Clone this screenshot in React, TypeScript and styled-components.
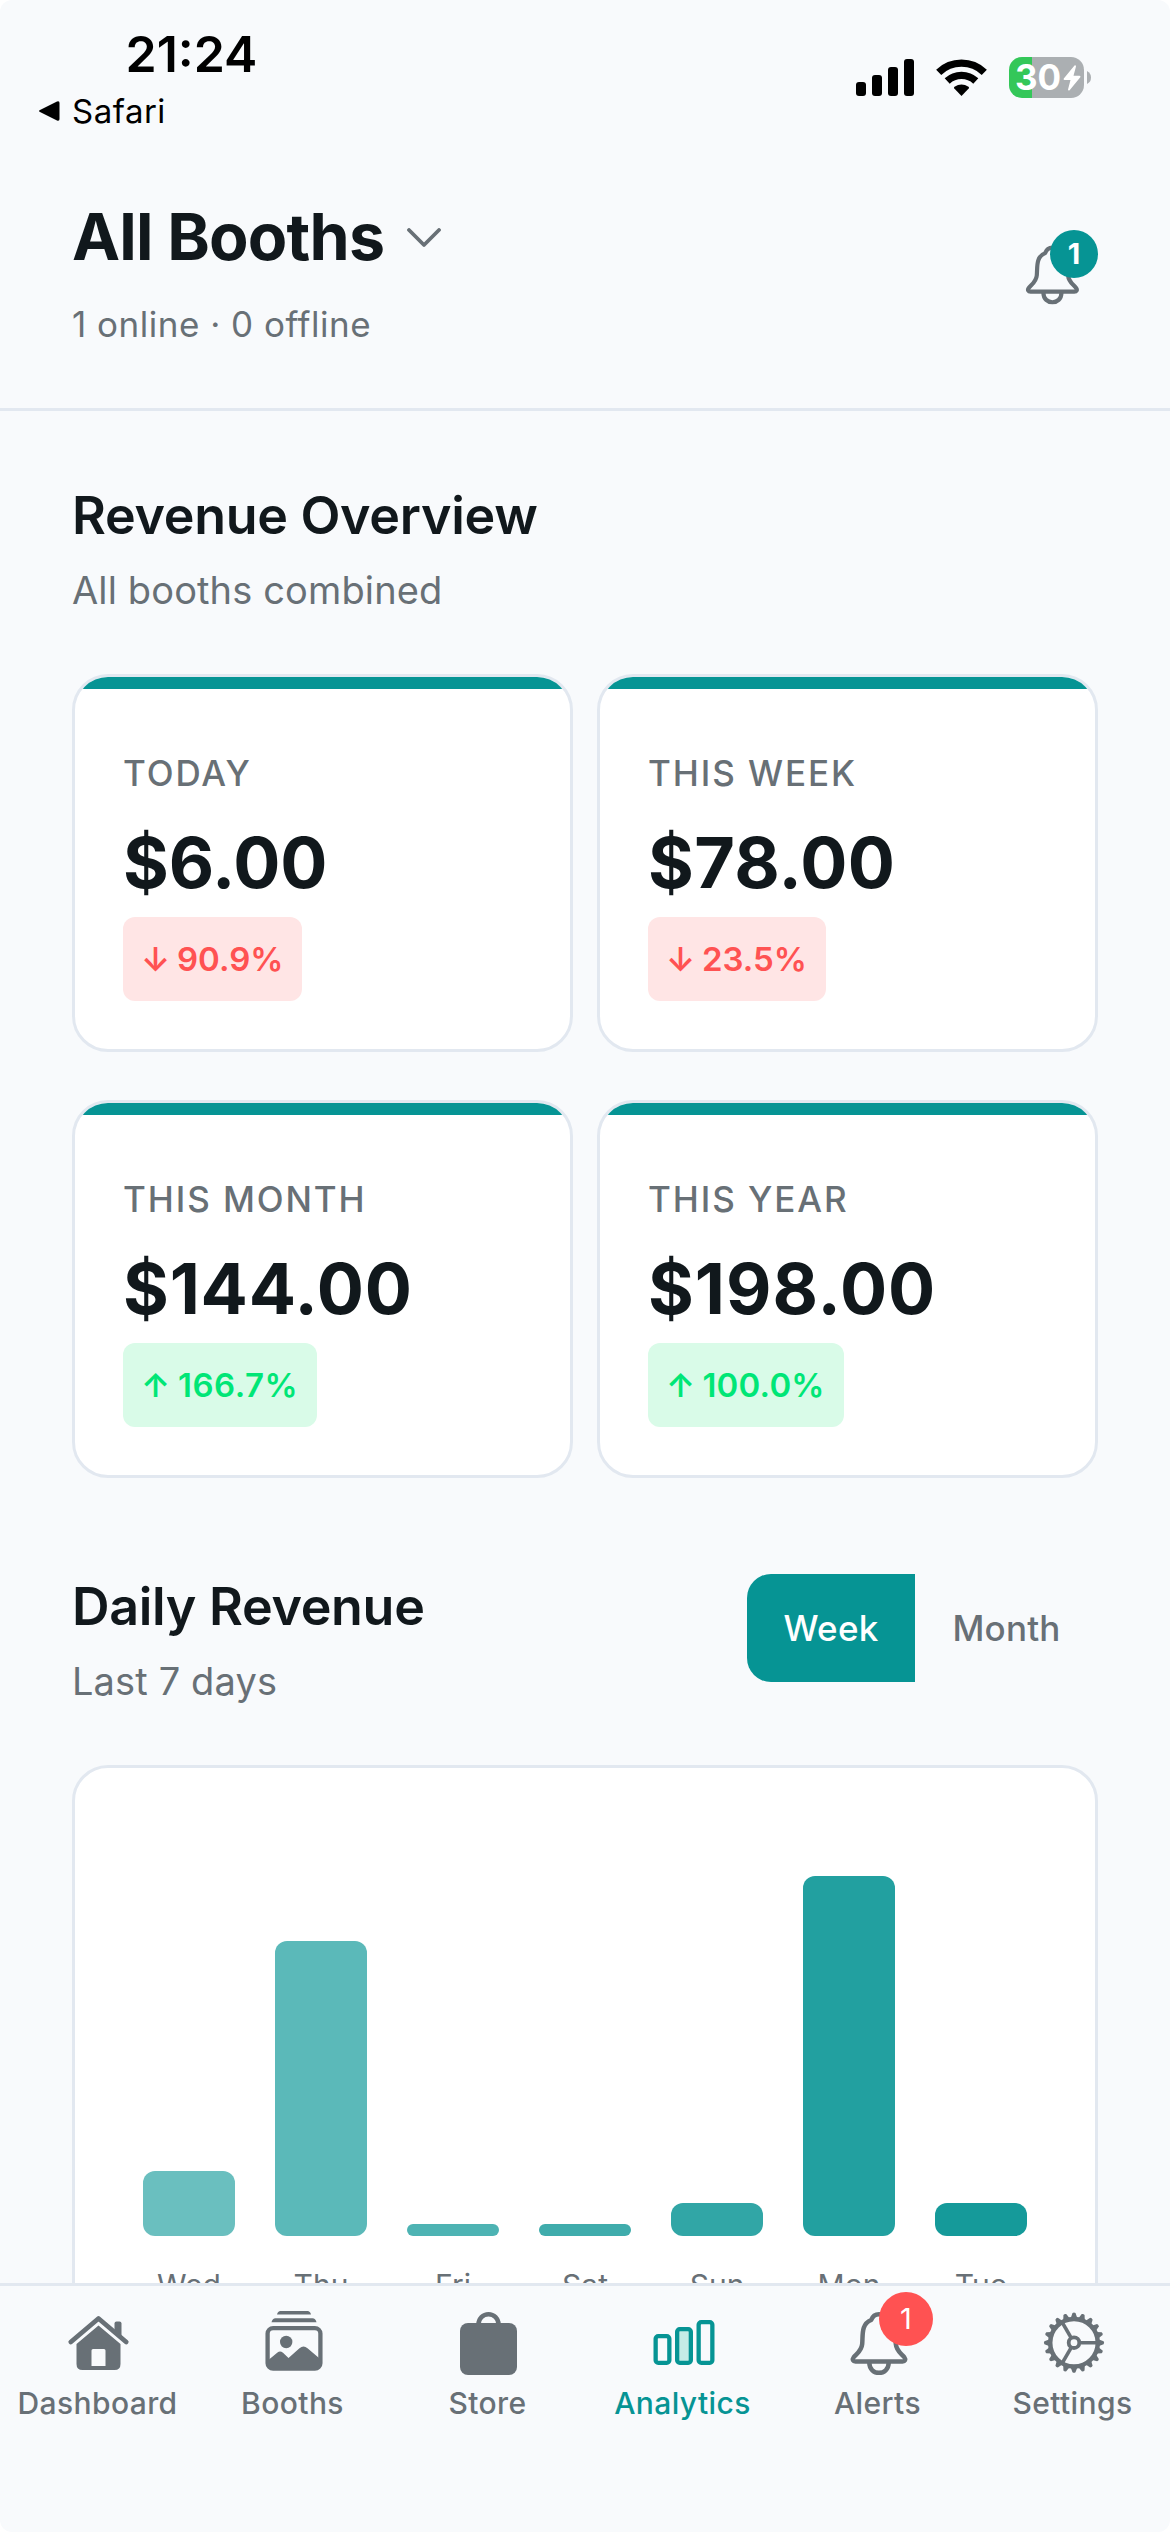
import React from "react";
import styled, { createGlobalStyle } from "styled-components";

const teal = "#069494";
const ink = "#11181c";
const muted = "#687076";
const line = "#e2e8f0";
const surface = "#f8fafc";

const GlobalStyle = createGlobalStyle`
  * { box-sizing: border-box; }
  body { margin: 0; background: #fff; }
`;

const Screen = styled.div`
  width: 1170px;
  height: 2532px;
  display: flex;
  flex-direction: column;
  overflow: hidden;
  border-radius: 12px;
  background: ${surface};
  color: ${ink};
  font-family: Inter, "Liberation Sans", sans-serif;
`;

const StatusBar = styled.div`
  height: 141px;
  flex: none;
  display: flex;
  justify-content: space-between;
  padding: 24px 79px 0 38px;
  color: #000;
`;

const Time = styled.div`
  padding-left: 87.5px;
  font-size: 50px;
  line-height: 60px;
  font-weight: 600;
  letter-spacing: 0;
`;

const BackLink = styled.div`
  display: flex;
  align-items: center;
  gap: 11px;
  margin-top: 7px;
  font-size: 33px;
  line-height: 40px;
  font-weight: 400;
  letter-spacing: 0.5px;
`;

const StatusIcons = styled.div`
  height: 41px;
  margin-top: 33px;
  display: flex;
  align-items: center;
`;

const Signal = styled.svg`
  margin-right: 22px;
`;

const Wifi = styled.svg`
  margin-right: 22px;
`;

const Battery = styled.div`
  width: 75px;
  height: 41px;
  border-radius: 13px;
  display: flex;
  align-items: center;
  padding-left: 6px;
  gap: 2px;
  background: linear-gradient(90deg, #34c759 23px, #abafb2 23px);
  color: #fff;
  font-size: 35px;
  line-height: 41px;
  font-weight: 700;
`;

const BatteryNub = styled.svg`
  margin-left: 3px;
`;

const Header = styled.header`
  height: 270px;
  flex: none;
  display: flex;
  justify-content: space-between;
  padding: 58px 72px 0;
  border-bottom: 3px solid ${line};
`;

const TitleRow = styled.div`
  display: flex;
  align-items: center;
  gap: 23px;
`;

const Title = styled.h1`
  margin: 0;
  font-size: 64.5px;
  line-height: 77px;
  font-weight: 700;
  letter-spacing: -0.8px;
`;

const HeaderStatus = styled.div`
  margin-top: 24px;
  font-size: 35px;
  line-height: 48px;
  letter-spacing: 0.5px;
  color: ${muted};
`;

const HeaderBell = styled.div`
  position: relative;
  width: 80px;
  height: 80px;
  margin-top: 31px;
  padding-top: 11px;
`;

const CountBadge = styled.span<{ $size: number; $color: string; $weight: number; $top: number; $left: number }>`
  position: absolute;
  top: ${(p) => p.$top}px;
  left: ${(p) => p.$left}px;
  width: ${(p) => p.$size}px;
  height: ${(p) => p.$size}px;
  border-radius: 50%;
  background: ${(p) => p.$color};
  color: #fff;
  font-size: 29px;
  line-height: ${(p) => p.$size}px;
  font-weight: ${(p) => p.$weight};
  letter-spacing: 0;
  text-align: center;
`;

const Main = styled.main`
  flex: 1;
  min-height: 0;
  overflow: hidden;
  padding: 72px 72px 0;
`;

const SectionTitle = styled.h2`
  margin: 0;
  font-size: 52px;
  line-height: 66px;
  font-weight: 600;
  letter-spacing: -0.3px;
`;

const SectionSub = styled.div`
  margin: 14px 0 57px;
  font-size: 38px;
  line-height: 54px;
  letter-spacing: 0.13px;
  color: ${muted};
`;

const CardGrid = styled.div`
  display: grid;
  grid-template-columns: 1fr 1fr;
  gap: 48px 24px;
`;

const Card = styled.article`
  height: 378px;
  border: 3px solid ${line};
  border-radius: 36px;
  overflow: hidden;
  background: #fff;
`;

const Accent = styled.div`
  height: 12px;
  background: ${teal};
`;

const CardBody = styled.div`
  padding: 60px 48px 0;
  display: flex;
  flex-direction: column;
  align-items: flex-start;
`;

const CardLabel = styled.div`
  font-size: 35px;
  line-height: 48px;
  font-weight: 500;
  letter-spacing: 1.9px;
  color: ${muted};
`;

const CardValue = styled.div<{ $tracking: number }>`
  margin-top: 24px;
  font-size: 70px;
  line-height: 84px;
  font-weight: 700;
  letter-spacing: ${(p) => p.$tracking}px;
`;

const Trend = styled.div<{ $up: boolean; $tracking: number }>`
  height: 84px;
  margin-top: 12px;
  padding: 0 19px 0 18px;
  border-radius: 12px;
  background: ${(p) => (p.$up ? "#d9fbe8" : "#ffe5e5")};
  color: ${(p) => (p.$up ? "#00e676" : "#ff5252")};
  font-size: 33px;
  line-height: 84px;
  font-weight: 600;
  letter-spacing: ${(p) => p.$tracking}px;
  word-spacing: -1.4px;
  white-space: pre;
`;

const DailyHead = styled.div`
  margin-top: 96px;
  display: flex;
  justify-content: space-between;
  align-items: flex-start;
`;

const Segments = styled.div`
  display: flex;
  height: 108px;
  border-radius: 24px;
  overflow: hidden;
`;

const Segment = styled.button<{ $active?: boolean }>`
  width: ${(p) => (p.$active ? 168 : 183)}px;
  padding: 0;
  border: 0;
  background: ${(p) => (p.$active ? teal : "transparent")};
  color: ${(p) => (p.$active ? "#fff" : muted)};
  font: 500 35px/108px Inter, "Liberation Sans", sans-serif;
  letter-spacing: 0.2px;
`;

const ChartCard = styled.div`
  height: 640px;
  display: flex;
  padding: 48px 48px 0;
  border: 3px solid ${line};
  border-radius: 36px;
  background: #fff;
`;

const Column = styled.div`
  flex: 1;
  display: flex;
  flex-direction: column;
  align-items: center;
`;

const BarTrack = styled.div`
  height: 420px;
  display: flex;
  align-items: flex-end;
`;

const Bar = styled.div`
  width: 92px;
  border-radius: 12px;
  background: ${teal};
`;

const Day = styled.div`
  margin-top: 28px;
  font-size: 30px;
  line-height: 42px;
  font-weight: 400;
  color: ${muted};
`;

const TabBar = styled.nav`
  height: 249px;
  flex: none;
  display: grid;
  grid-template-columns: repeat(6, 1fr);
  border-top: 3px solid ${line};
  padding-top: 21px;
`;

const Tab = styled.div<{ $active?: boolean }>`
  display: flex;
  flex-direction: column;
  align-items: center;
  gap: 6px;
  color: ${(p) => (p.$active ? teal : muted)};
  font-size: 30px;
  line-height: 36px;
  font-weight: 500;
  letter-spacing: 0.4px;
`;

const TabIcon = styled.div`
  position: relative;
  width: 72px;
  height: 72px;
  svg { display: block; }
`;

const BellIcon = ({ size, stroke = 4.5 }: { size: number; stroke?: number }) => (
  <svg width={size} height={size} viewBox="0 0 72 72" fill="none" stroke={muted} strokeWidth={stroke} strokeLinejoin="round">
    <path d="M13.5 54.5H60.5C63 54.5 64 52.5 62.5 50.5C60 47 54.5 44.5 53.8 37C53 28 55 17 44.8 13C43.5 9.5 41 7.2 37 7.2C33 7.2 30.5 9.5 29.2 13C19 17 21 28 20.2 37C19.5 44.5 14 47 11.5 50.5C10 52.5 11 54.5 13.5 54.5Z" />
    <path d="M27.3 55.5C27.3 69.3 46.7 69.3 46.7 55.5" />
  </svg>
);

const HouseIcon = () => (
  <svg width="72" height="72" viewBox="0 0 72 72" fill={muted}>
    <path d="M8.8 35L36.5 11.5L64.2 35" fill="none" stroke={muted} strokeWidth="4.8" strokeLinecap="round" strokeLinejoin="round" />
    <path d="M52.5 26V16.5Q52.5 14.5 54.5 14.5H57.5Q59.5 14.5 59.5 16.5V32Z" />
    <path fillRule="evenodd" d="M36.5 18.5L58.5 37V57Q58.5 63 52.5 63H20.5Q14.5 63 14.5 57V37ZM31 42Q29.5 42 29.5 43.5V59H43.5V43.5Q43.5 42 42 42Z" />
  </svg>
);

const PhotosIcon = () => (
  <svg width="72" height="72" viewBox="0 0 72 72" fill={muted}>
    <path d="M20 7.5Q20.8 4 23.5 4H50.5Q53.2 4 54 7.5Z" />
    <path d="M14.5 15.2Q15.5 11.2 18.5 11.2H55.5Q58.5 11.2 59.5 15.2Z" />
    <rect x="10.6" y="21.1" width="52.8" height="40.6" rx="5.5" fill="none" stroke={muted} strokeWidth="4.3" />
    <circle cx="29.2" cy="35" r="6.2" />
    <path d="M12 52.5L20.5 45.5Q23.2 43.6 26 45.8L31.5 51L42.5 41.2Q46.5 37.8 50.5 41.2L62 51V60H12Z" />
  </svg>
);

const BagIcon = () => (
  <svg width="72" height="72" viewBox="0 0 72 72" fill={muted}>
    <rect x="8" y="16" width="57" height="52" rx="8" />
    <path d="M26.5 18V17.2A10 10 0 0 1 46.5 17.2V18" fill="none" stroke={muted} strokeWidth="4.5" />
  </svg>
);

const ChartIcon = () => (
  <svg width="72" height="72" viewBox="0 0 72 72" fill="none" stroke={teal} strokeWidth="4.3">
    <rect x="8.65" y="29.15" width="13.7" height="26.7" rx="2.6" />
    <rect x="30.15" y="22.15" width="13.7" height="33.7" rx="2.6" fill="#c5ece6" />
    <rect x="51.65" y="15.15" width="13.7" height="40.7" rx="2.6" />
  </svg>
);

const GearIcon = () => {
  const teeth = Array.from({ length: 20 }, (_, i) => i * 18);
  return (
    <svg width="72" height="72" viewBox="0 0 72 72">
      <g transform="translate(37 35.7)" fill="none" stroke={muted}>
        <circle r="23.8" strokeWidth="4.5" />
        <g fill={muted} stroke="none">
          {teeth.map((a) => (
            <path key={a} d="M25 -3.2L29.6 -1.5Q30.6 0 29.6 1.5L25 3.2Z" transform={`rotate(${a})`} />
          ))}
        </g>
        <circle r="5.3" strokeWidth="3.8" />
        {[0, 120, 240].map((a) => (
          <path key={a} d="M6.5 0H23" strokeWidth="3.6" transform={`rotate(${a})`} />
        ))}
      </g>
    </svg>
  );
};

const stats = [
  { label: "TODAY", value: "$6.00", trend: "90.9%", up: false, valueTracking: -0.1, trendTracking: 0 },
  { label: "THIS WEEK", value: "$78.00", trend: "23.5%", up: false, valueTracking: 0.3, trendTracking: 0 },
  { label: "THIS MONTH", value: "$144.00", trend: "166.7%", up: true, valueTracking: 0.8, trendTracking: 0.5 },
  { label: "THIS YEAR", value: "$198.00", trend: "100.0%", up: true, valueTracking: 1, trendTracking: 0.2 },
];

const days = [
  { name: "Wed", height: 65 },
  { name: "Thu", height: 295 },
  { name: "Fri", height: 12 },
  { name: "Sat", height: 12 },
  { name: "Sun", height: 33 },
  { name: "Mon", height: 360 },
  { name: "Tue", height: 33 },
];

export default function App() {
  return (
    <>
      <GlobalStyle />
      <Screen>
        <StatusBar>
          <div>
            <Time>21:24</Time>
            <BackLink>
              <svg width="23" height="22" viewBox="0 0 23 22">
                <path d="M2 10L19 1.5Q21.5 .6 21.5 3V19Q21.5 21.4 19 20.5L2 12Q0 11 2 10Z" />
              </svg>
              Safari
            </BackLink>
          </div>
          <StatusIcons>
            <Signal width="58" height="37" viewBox="0 0 58 37">
              <rect x="0" y="23" width="10" height="14" rx="3" />
              <rect x="16" y="16" width="10" height="21" rx="3" />
              <rect x="32" y="8" width="10" height="29" rx="3" />
              <rect x="48" y="0" width="10" height="37" rx="3" />
            </Signal>
            <Wifi width="51" height="37" viewBox="0 0 51 37">
              <path d="M2.7 13.3A33 33 0 0 1 48.3 13.3" fill="none" stroke="#000" strokeWidth="7.4" />
              <path d="M11.2 22A21 21 0 0 1 39.8 22" fill="none" stroke="#000" strokeWidth="7.4" />
              <path d="M25.5 37L18.3 29.6Q17.5 28.6 18.5 27.8Q25.5 23 32.5 27.8Q33.5 28.6 32.7 29.6Z" />
            </Wifi>
            <Battery>
              30
              <svg width="18" height="26" viewBox="0 0 18 26" fill="#fff">
                <path d="M11.5 .5L.8 13.6Q.2 15 1.5 15H7.5L5 24.5Q5.2 26.2 6.6 25.2L17.3 12.2Q17.8 10.8 16.5 10.8H10.5L13 1.5Q12.8 -.3 11.5 .5Z" />
              </svg>
            </Battery>
            <BatteryNub width="4" height="13" viewBox="0 0 4 13" fill="#abafb2">
              <path d="M0 0Q4 2 4 6.5Q4 11 0 13Z" />
            </BatteryNub>
          </StatusIcons>
        </StatusBar>

        <Header>
          <div>
            <TitleRow>
              <Title>All Booths</Title>
              <svg width="34" height="20" viewBox="0 0 34 20" fill="none" stroke={muted} strokeWidth="3.8" strokeLinecap="round" strokeLinejoin="round">
                <path d="M2 2L17 17L32 2" />
              </svg>
            </TitleRow>
            <HeaderStatus>1 online · 0 offline</HeaderStatus>
          </div>
          <HeaderBell>
            <BellIcon size={67} />
            <CountBadge $size={48} $color={teal} $weight={700} $top={0} $left={32}>1</CountBadge>
          </HeaderBell>
        </Header>

        <Main>
          <SectionTitle>Revenue Overview</SectionTitle>
          <SectionSub>All booths combined</SectionSub>
          <CardGrid>
            {stats.map((s) => (
              <Card key={s.label}>
                <Accent />
                <CardBody>
                  <CardLabel>{s.label}</CardLabel>
                  <CardValue $tracking={s.valueTracking}>{s.value}</CardValue>
                  <Trend $up={s.up} $tracking={s.trendTracking}>{`${s.up ? "↑" : "↓"} ${s.trend}`}</Trend>
                </CardBody>
              </Card>
            ))}
          </CardGrid>

          <DailyHead>
            <div>
              <SectionTitle>Daily Revenue</SectionTitle>
              <SectionSub>Last 7 days</SectionSub>
            </div>
            <Segments>
              <Segment $active>Week</Segment>
              <Segment>Month</Segment>
            </Segments>
          </DailyHead>
          <ChartCard>
            {days.map((d, i) => (
              <Column key={d.name}>
                <BarTrack>
                  <Bar style={{ height: d.height, opacity: 0.6 + (i / days.length) * 0.4 }} />
                </BarTrack>
                <Day>{d.name}</Day>
              </Column>
            ))}
          </ChartCard>
        </Main>

        <TabBar>
          <Tab>
            <TabIcon><HouseIcon /></TabIcon>
            Dashboard
          </Tab>
          <Tab>
            <TabIcon><PhotosIcon /></TabIcon>
            Booths
          </Tab>
          <Tab>
            <TabIcon><BagIcon /></TabIcon>
            Store
          </Tab>
          <Tab $active>
            <TabIcon><ChartIcon /></TabIcon>
            Analytics
          </Tab>
          <Tab>
            <TabIcon>
              <BellIcon size={72} />
              <CountBadge $size={54} $color="#ff5252" $weight={400} $top={-15} $left={37.5}>1</CountBadge>
            </TabIcon>
            Alerts
          </Tab>
          <Tab>
            <TabIcon><GearIcon /></TabIcon>
            Settings
          </Tab>
        </TabBar>
      </Screen>
    </>
  );
}
